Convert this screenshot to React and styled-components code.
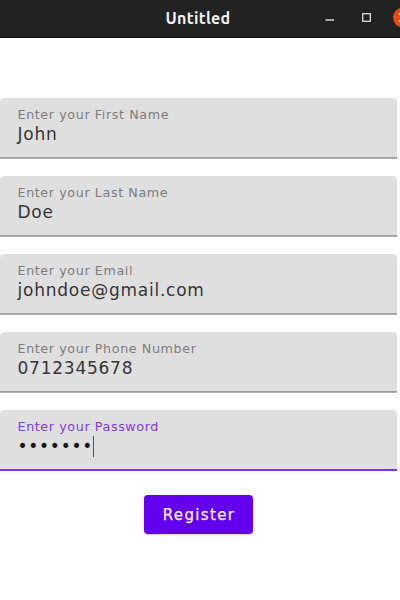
import React from "react";
import styled, { createGlobalStyle } from "styled-components";

const GlobalStyle = createGlobalStyle`
  * { box-sizing: border-box; }
  body { margin: 0; background: #fff; overflow: hidden; }
`;

const Window = styled.main`
  width: 400px;
  height: 600px;
  overflow: hidden;
  background: #fff;
  font-family: "DejaVu Sans", sans-serif;
`;

const TitleBar = styled.header`
  display: grid;
  grid-template-columns: 76px 244px 80px;
  height: 38px;
  background: #222;
  border-bottom: 1px solid #171717;
  overflow: hidden;
`;

const Title = styled.h1`
  grid-column: 2;
  margin: 0;
  text-align: center;
  font: 700 16px/36px Ubuntu, "Noto Sans", sans-serif;
  letter-spacing: 0.3px;
  color: #f2f2f2;
`;

const Controls = styled.svg`
  display: block;
  width: 90px;
  height: 37px;
`;

const Form = styled.form`
  display: flex;
  flex-direction: column;
  gap: 17px;
  width: 397px;
  padding-top: 59.5px;
`;

const Field = styled.label`
  display: flex;
  flex-direction: column;
  height: 61px;
  padding: 8px 17.5px 0;
  border-radius: 4.5px 4.5px 0 0;
  background: #dfdfdf;
  box-shadow: ${(p) =>
    p.$active
      ? "inset 0 -2px 0 #7f30e9"
      : "inset 0 -1px 0 #b0b0b0, inset 0 -2px 0 #a0a0a0"};
`;

const Caption = styled.span`
  height: 18px;
  font-size: 12.7px;
  line-height: 17px;
  letter-spacing: 0.61px;
  color: ${(p) => (p.$active ? "#8138e9" : "#7d7d7d")};
  white-space: nowrap;
`;

const Value = styled.span`
  display: flex;
  align-items: center;
  height: 21px;
  font-size: 17px;
  line-height: 21px;
  letter-spacing: 0.76px;
  color: ${(p) => (p.$active ? "#151515" : "#363636")};
`;

const Caret = styled.i`
  width: 1px;
  height: 21px;
  background: #702ad2;
`;

const RegisterButton = styled.button`
  align-self: center;
  width: 109px;
  height: 39px;
  margin: 7px 0 0;
  padding: 1px 0 0 1px;
  border: 0;
  border-radius: 4px;
  background: #6200ee;
  box-shadow: 0 1px 2px rgba(0, 0, 0, 0.22);
  color: #f5eeff;
  font: 15px/38px "DejaVu Sans", sans-serif;
  letter-spacing: 1.35px;
  -webkit-text-stroke: 0.25px #f5eeff;
`;

const fields = [
  { caption: "Enter your First Name", value: "John" },
  { caption: "Enter your Last Name", value: "Doe" },
  { caption: "Enter your Email", value: "johndoe@gmail.com" },
  { caption: "Enter your Phone Number", value: "0712345678" },
  { caption: "Enter your Password", value: "•••••••", active: true },
];

export default function App() {
  return (
    <Window>
      <GlobalStyle />
      <TitleBar>
        <Title>Untitled</Title>
        <Controls viewBox="0 0 90 37" aria-label="Window controls">
          <path d="M5.5 20h8.5" stroke="#c8c8c8" strokeWidth="1.6" fill="none" />
          <rect x="42.7" y="13.7" width="7.6" height="7.6" stroke="#dfdfdf" strokeWidth="1.3" fill="none" />
          <circle cx="83" cy="17.5" r="10" fill="#e44b17" />
          <path d="m79 13.5 8 8m0-8-8 8" stroke="#fff" strokeWidth="1.3" />
        </Controls>
      </TitleBar>
      <Form>
        {fields.map(({ caption, value, active }) => (
          <Field key={caption} $active={active}>
            <Caption $active={active}>{caption}</Caption>
            <Value $active={active}>
              {value}
              {active && <Caret />}
            </Value>
          </Field>
        ))}
        <RegisterButton type="button">Register</RegisterButton>
      </Form>
    </Window>
  );
}
